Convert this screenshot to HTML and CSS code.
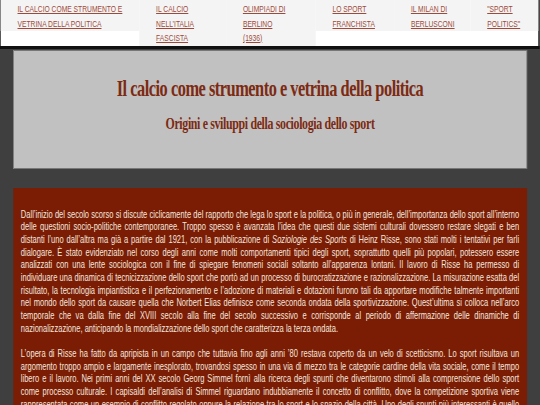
FILE: index.html
```html
<!DOCTYPE html>
<html lang="it">
<head>
<meta charset="utf-8">
<title>Il calcio come strumento e vetrina della politica</title>
<link rel="stylesheet" href="styles.css">
</head>
<body>
<div class="page">
  <nav class="topnav">
    <div class="cell c1"><a href="#">Il calcio come strumento e<br>vetrina della politica</a></div>
    <div class="cell c2"><a href="#">Il calcio<br>nell’Italia<br>fascista</a></div>
    <div class="cell c3"><a href="#">Olimpiadi di<br>Berlino<br>(1936)</a></div>
    <div class="cell c4"><a href="#">Lo sport<br>franchista</a></div>
    <div class="cell c5"><a href="#">Il Milan di<br>Berlusconi</a></div>
    <div class="cell c6"><a href="#">"Sport<br>politics"</a></div>
  </nav>

  <header class="hero">
    <h1 class="hero-title">Il calcio come strumento e vetrina della politica</h1>
    <h2 class="hero-sub">Origini e sviluppi della sociologia dello sport</h2>
  </header>

  <main class="article">
    <p>Dall’inizio del secolo scorso si discute ciclicamente del rapporto che lega lo sport e la politica, o più in generale, dell’importanza dello sport all’interno delle questioni socio-politiche contemporanee. Troppo spesso è avanzata l’idea che questi due sistemi culturali dovessero restare slegati e ben distanti l’uno dall’altra ma già a partire dal 1921, con la pubblicazione di <i>Soziologie des Sports</i> di Heinz Risse, sono stati molti i tentativi per farli dialogare. È stato evidenziato nel corso degli anni come molti comportamenti tipici degli sport, soprattutto quelli più popolari, potessero essere analizzati con una lente sociologica con il fine di spiegare fenomeni sociali soltanto all’apparenza lontani. Il lavoro di Risse ha permesso di individuare una dinamica di tecnicizzazione dello sport che portò ad un processo di burocratizzazione e razionalizzazione. La misurazione esatta del risultato, la tecnologia impiantistica e il perfezionamento e l’adozione di materiali e dotazioni furono tali da apportare modifiche talmente importanti nel mondo dello sport da causare quella che Norbert Elias definisce come seconda ondata della sportivizzazione. Quest’ultima si colloca nell’arco temporale che va dalla fine del XVIII secolo alla fine del secolo successivo e corrisponde al periodo di affermazione delle dinamiche di nazionalizzazione, anticipando la mondializzazione dello sport che caratterizza la terza ondata.</p>
    <p>L’opera di Risse ha fatto da apripista in un campo che tuttavia fino agli anni ’80 restava coperto da un velo di scetticismo. Lo sport risultava un argomento troppo ampio e largamente inesplorato, trovandosi spesso in una via di mezzo tra le categorie cardine della vita sociale, come il tempo libero e il lavoro. Nei primi anni del XX secolo Georg Simmel fornì alla ricerca degli spunti che diventarono stimoli alla comprensione dello sport come processo culturale. I capisaldi dell’analisi di Simmel riguardano indubbiamente il concetto di conflitto, dove la competizione sportiva viene rappresentata come un esempio di conflitto regolato oppure la relazione tra lo sport e lo spazio della città. Uno degli spunti più interessanti è quello legato alla figura dello straniero, che nello sport trova una delle sue rappresentazioni più evidenti.</p>
  </main>
</div>
</body>
</html>
```

FILE: styles.css
```css
html, body {
  margin: 0;
  padding: 0;
  background: #3f3f3f;
  overflow-x: hidden;
}

.page {
  width: 771.43px;
  transform: scaleX(0.7);
  transform-origin: 0 0;
}

/* top navigation */
.topnav {
  display: flex;
  align-items: flex-start;
  background: #ffffff;
  border-left: 1.43px solid #111;
  border-right: 2.86px solid #111;
  border-bottom: 3px solid #111;
  height: 46px;
  font-family: "Liberation Sans", Arial, sans-serif;
  font-size: 9.6px;
  line-height: 14.6px;
  text-transform: uppercase;
}

.cell {
  background: #f4f4f4;
  padding: 2px 0 0 24px;
  box-sizing: border-box;
  white-space: nowrap;
}

.cell a {
  color: #9e4a3a;
  text-decoration: underline;
}

.c1 { width: 198px; height: 31.2px; }
.c2 { width: 124px; height: 46px; }
.c3 { width: 128px; height: 46px; }
.c4 { width: 112px; height: 31.2px; }
.c5 { width: 109px; height: 31.2px; }
.c6 { flex: 1; height: 31.2px; }

/* header banner */
.hero {
  width: 734px;
  margin: 1px auto 0;
  box-sizing: border-box;
  background: #c1c1c1;
  border: 1px solid #777;
  border-left-width: 1.43px;
  border-right-width: 1.43px;
  padding: 23px 0 34px;
  text-align: center;
  font-family: "Liberation Serif", "Times New Roman", serif;
  font-weight: bold;
  color: #7d2a12;
}

.hero-title {
  margin: 0;
  font-size: 23.4px;
  line-height: 28px;
  letter-spacing: -0.7px;
}

.hero-sub {
  margin: 12px 0 0;
  font-size: 17px;
  line-height: 20px;
  letter-spacing: -0.5px;
}

/* article */
.article {
  width: 734px;
  margin: 19px auto 0;
  box-sizing: border-box;
  background: #7b1d05;
  padding: 7px 11px 8px 11px;
  font-family: "Liberation Sans", Arial, sans-serif;
  font-size: 10.8px;
  line-height: 12.67px;
  color: #f3e6de;
  text-align: justify;
}

.article p {
  margin: 12.67px 0;
}
```
